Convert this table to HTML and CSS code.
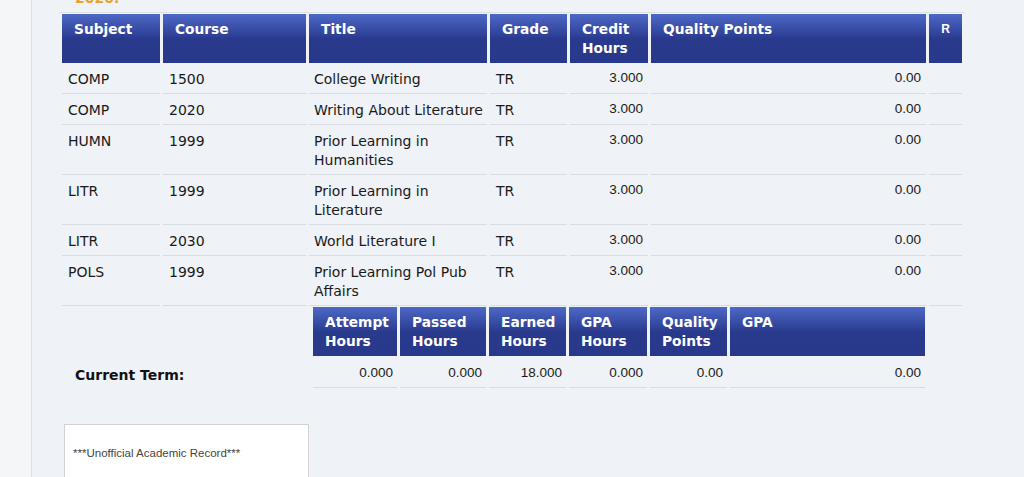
FILE: index.html
```html
<!DOCTYPE html>
<html lang="en">
<head>
	<meta charset="UTF-8">
	<title>Academic Transcript</title>
	<link rel="stylesheet" href="styles.css">
</head>
<body>
	<div class="page">
		<div class="term-title">2020.</div>

		<table class="courses">
			<tr>
				<th class="c-subj">Subject</th>
				<th class="c-crse">Course</th>
				<th class="c-title">Title</th>
				<th class="c-grade">Grade</th>
				<th class="c-cred">Credit<br>Hours</th>
				<th class="c-qp">Quality Points</th>
				<th class="c-r">R</th>
			</tr>
			<tr>
				<td>COMP</td><td>1500</td><td>College Writing</td><td>TR</td>
				<td class="num">3.000</td><td class="num">0.00</td><td></td>
			</tr>
			<tr>
				<td>COMP</td><td>2020</td><td>Writing About Literature</td><td>TR</td>
				<td class="num">3.000</td><td class="num">0.00</td><td></td>
			</tr>
			<tr>
				<td>HUMN</td><td>1999</td><td>Prior Learning in Humanities</td><td>TR</td>
				<td class="num">3.000</td><td class="num">0.00</td><td></td>
			</tr>
			<tr>
				<td>LITR</td><td>1999</td><td>Prior Learning in Literature</td><td>TR</td>
				<td class="num">3.000</td><td class="num">0.00</td><td></td>
			</tr>
			<tr>
				<td>LITR</td><td>2030</td><td>World Literature I</td><td>TR</td>
				<td class="num">3.000</td><td class="num">0.00</td><td></td>
			</tr>
			<tr>
				<td>POLS</td><td>1999</td><td>Prior Learning Pol Pub Affairs</td><td>TR</td>
				<td class="num">3.000</td><td class="num">0.00</td><td></td>
			</tr>
		</table>

		<div class="totals">
			<div class="totals-label">Current Term:</div>
			<table class="summary">
				<tr>
					<th class="s-att">Attempt<br>Hours</th>
					<th class="s-pass">Passed<br>Hours</th>
					<th class="s-earn">Earned<br>Hours</th>
					<th class="s-gpah">GPA<br>Hours</th>
					<th class="s-qp">Quality<br>Points</th>
					<th class="s-gpa">GPA</th>
				</tr>
				<tr>
					<td class="num">0.000</td>
					<td class="num">0.000</td>
					<td class="num">18.000</td>
					<td class="num">0.000</td>
					<td class="num">0.00</td>
					<td class="num">0.00</td>
				</tr>
			</table>
		</div>

		<div class="notice">***Unofficial Academic Record***</div>
	</div>
</body>
</html>
```

FILE: styles.css
```css
body{
	margin: 0;
	background: #f5f6f8;
	font-family: "DejaVu Sans", Verdana, sans-serif;
	color: #1a1a1a;
}
.page{
	margin-left: 31px;
	border-left: 1px solid #dcdfe3;
	background: #eff2f6;
	min-height: 477px;
	padding-left: 27px;
	overflow: hidden;
}
.term-title{
	color: #e8a22e;
	font-weight: bold;
	font-size: 14px;
	line-height: 16px;
	margin-top: -10px;
	padding-left: 16px;
}
table{
	border-collapse: separate;
	border-spacing: 3px 1px;
	table-layout: fixed;
}
th, td{
	box-sizing: border-box;
}
th{
	background: linear-gradient(to bottom, #4d68c6 0px, #2e4096 22px, #29398c 25px, #28388a 100%);
	color: #fff;
	font-size: 13.75px;
	line-height: 19px;
	text-align: left;
	vertical-align: top;
	padding: 6px 4px 5px 12px;
}
td{
	font-size: 14px;
	line-height: 19px;
	vertical-align: top;
	padding: 6px 2px 4px 6px;
	border-bottom: 1px solid #d9dde2;
}
td.num{
	font-family: "Liberation Sans", Arial, sans-serif;
	font-size: 13.5px;
	text-align: right;
	padding: 4px 5px 6px;
}
.courses{
	width: 906px;
	margin-top: 6px;
	border-top: 1px solid #dde1e6;
}
.courses th{
	height: 49px;
}
.c-subj{ width: 98px; }
.c-crse{ width: 143px; }
.c-title{ width: 178px; }
.c-grade{ width: 77px; }
.c-cred{ width: 78px; }
.c-qp{ width: 275px; }
.c-r{
	width: 33px;
	padding: 8px 0 0;
	text-align: center;
	font-family: "Liberation Sans", Arial, sans-serif;
	font-size: 12px;
	line-height: 14px;
}
.courses td:nth-child(3){
	padding-left: 5px;
}
.totals{
	display: flex;
	margin-top: 1px;
}
.totals-label{
	width: 235px;
	padding-left: 16px;
	padding-top: 59px;
	font-weight: bold;
	font-size: 14px;
	color: #111;
}
.summary{
	width: 618px;
	margin-top: -2px;
}
.summary th{
	height: 48px;
}
.s-att{ width: 84px; }
.s-pass{ width: 86px; }
.s-earn{ width: 77px; }
.s-gpah{ width: 78px; }
.s-qp{ width: 77px; }
.s-gpa{ width: 195px; }
.summary td.num{
	padding: 6px 4px 5px;
}
.notice{
	margin: 35px 0 0 5px;
	width: 245px;
	height: 80px;
	background: #fff;
	border: 1px solid #cfd2d6;
	padding: 22px 0 0 8px;
	box-sizing: border-box;
	font-family: "Liberation Sans", Arial, sans-serif;
	font-size: 11.5px;
	color: #444;
}
```
